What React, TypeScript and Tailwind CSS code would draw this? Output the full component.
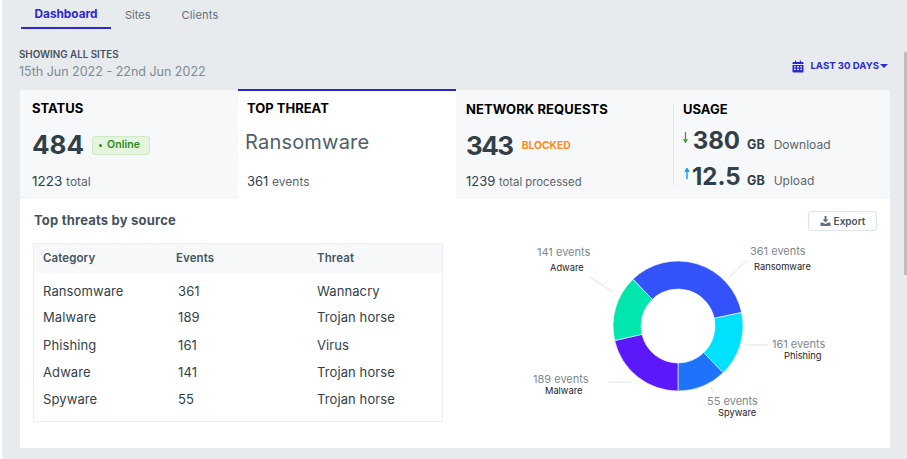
const font = "font-['Inter','Noto_Sans',sans-serif]";

function polar(r: number, deg: number) {
  const a = (deg * Math.PI) / 180;
  return [(100 + r * Math.sin(a)).toFixed(2), (100 - r * Math.cos(a)).toFixed(2)];
}

function seg(a0: number, a1: number) {
  const R = 65;
  const r = 37;
  const [x0, y0] = polar(R, a0);
  const [x1, y1] = polar(R, a1);
  const [x2, y2] = polar(r, a1);
  const [x3, y3] = polar(r, a0);
  const large = a1 - a0 > 180 ? 1 : 0;
  return `M${x0} ${y0}A${R} ${R} 0 ${large} 1 ${x1} ${y1}L${x2} ${y2}A${r} ${r} 0 ${large} 0 ${x3} ${y3}Z`;
}

function Donut() {
  const parts: [number, number, string][] = [
    [-44, 78, "#3352f9"],
    [78, 136, "#00e1fd"],
    [136, 180, "#1f73fa"],
    [180, 257, "#5b18f8"],
    [257, 316, "#00e6ad"],
  ];
  return (
    <svg width="200" height="200" viewBox="0 0 200 200" className="shrink-0">
      {parts.map(([a, b, c]) => (
        <path key={c} d={seg(a, b)} fill={c} stroke="#fff" strokeWidth="0.6" />
      ))}
    </svg>
  );
}

function Tabs() {
  return (
    <div className="flex h-[29px] pl-[19px] text-[11px]">
      <div className="flex h-[29px] w-[90px] items-center justify-center border-b-2 border-[#2a2ad0] pt-[3px] text-[11.8px] font-bold text-[#2a2ad0]">
        Dashboard
      </div>
      <div className="ml-[14px] pt-[7px] text-[#5f6f7a]">Sites</div>
      <div className="ml-[31px] pt-[7px] tracking-[0.2px] text-[#5f6f7a]">Clients</div>
    </div>
  );
}

function Usage({ arrow, value, label }: { arrow: React.ReactNode; value: string; label: string }) {
  return (
    <div className="flex items-baseline">
      <span className="w-[9px] self-start pt-[6px]">{arrow}</span>
      <span className="w-[48px] text-right text-[24px] leading-[30px] font-bold text-[#333f48]">{value}</span>
      <span className="ml-[7px] text-[12.5px] font-bold text-[#333f48]">GB</span>
      <span className="ml-[9px] text-[12px] text-[#5b656d]">{label}</span>
    </div>
  );
}

const rows = [
  ["Ransomware", "361", "Wannacry", "h-[26px]"],
  ["Malware", "189", "Trojan horse", "h-[26px]"],
  ["Phishing", "161", "Virus", "h-[30px]"],
  ["Adware", "141", "Trojan horse", "h-[24px]"],
  ["Spyware", "55", "Trojan horse", "h-[30px]"],
];

export default function App() {
  return (
    <div className={`${font} relative h-[459px] w-[907px] overflow-hidden bg-white`}>
      <div className="ml-[2px] h-full bg-[#e8ebee]">
        <Tabs />
        <div className="flex h-[61px] items-start pl-[17px] pr-[17px]">
          <div className="pt-[20px]">
            <div className="text-[9.8px] leading-[12px] font-semibold text-[#47535c]">SHOWING ALL SITES</div>
            <div className="mt-[3px] text-[12.5px] leading-[16px] text-[#7b8a94]">15th Jun 2022 - 22nd Jun 2022</div>
          </div>
          <div className="ml-auto flex items-center pt-[30px] pr-[2px] text-[9.6px] font-bold text-[#2a2ad0]">
            <svg width="12" height="13" viewBox="0 0 12 13" fill="#2a2ad0" className="mr-[6px]">
              <path d="M1.5 2H3V.5h1.2V2h3.6V.5H9V2h1.5A1 1 0 0 1 11.5 3v1H.5V3a1 1 0 0 1 1-1Z" />
              <path fillRule="evenodd" d="M.5 5h11v6.5a1 1 0 0 1-1 1h-9a1 1 0 0 1-1-1V5Zm1.5 1.2v1.4h1.8V6.2H2Zm3 0v1.4h2V6.2H5Zm3.2 0v1.4H10V6.2H8.2ZM2 8.7v1.4h1.8V8.7H2Zm3 0v1.4h2V8.7H5Zm3.2 0v1.4H10V8.7H8.2Z" />
            </svg>
            LAST 30 DAYS
            <span className="ml-[1px] h-0 w-0 border-x-[4px] border-t-[4px] border-x-transparent border-t-[#2a2ad0]" />
          </div>
        </div>
        <div className="ml-[18px] h-[358px] w-[870px] bg-white">
          <div className="flex h-[108px] border-b border-[#eef0f2] bg-[#f6f8fa]">
            <div className="w-[218px] pl-[12px] pt-[10px]">
              <div className="text-[13px] leading-[16px] font-bold text-black">STATUS</div>
              <div className="mt-[12px] flex items-center">
                <span className="text-[26px] leading-[34px] font-bold text-[#333f48]">484</span>
                <span className="ml-[8px] flex h-[19px] w-[58px] items-center rounded-[3px] border border-[#cfeac4] bg-[#e3f5dc] pl-[6px] text-[10.6px] font-semibold text-[#2f8a1c]">
                  <span className="mr-[5px] h-[3px] w-[3px] rounded-full bg-[#2f8a1c]" />
                  Online
                </span>
              </div>
              <div className="mt-[11px] text-[13.5px] leading-[16px] text-[#333f48]">
                1223 <span className="text-[12px] text-[#5b656d]">total</span>
              </div>
            </div>
            <div className="-mt-[1px] h-[109px] w-[218px] border-t-2 border-[#2a2ad0] bg-white pl-[9px] pt-[9px]">
              <div className="text-[13px] leading-[16px] font-bold text-black">TOP THREAT</div>
              <div className="mt-[12px] -ml-[2px] text-[20px] leading-[28px] tracking-[0.2px] text-[#4f5f69]">Ransomware</div>
              <div className="mt-[17px] text-[13px] leading-[16px] text-[#333f48]">
                361 <span className="text-[12px] text-[#5b656d]">events</span>
              </div>
            </div>
            <div className="w-[217px] pl-[10px] pt-[11px]">
              <div className="text-[13px] leading-[16px] tracking-[0.1px] font-bold text-black">NETWORK REQUESTS</div>
              <div className="mt-[12px] flex items-center">
                <span className="text-[26px] leading-[34px] font-bold tracking-[-1.5px] text-[#333f48]">343</span>
                <span className="ml-[9px] text-[10.3px] font-bold text-[#fb8c22]">BLOCKED</span>
              </div>
              <div className="mt-[10px] text-[13px] leading-[16px] text-[#333f48]">
                1239 <span className="text-[11.3px] text-[#5b656d]">total processed</span>
              </div>
            </div>
            <div className="mt-[13px] mb-[11px] flex-1 border-l border-[#e6e9ec] pl-[9px]">
              <div className="-mt-[2px] text-[13px] leading-[16px] font-bold text-black">USAGE</div>
              <div className="mt-[9px]">
                <Usage
                  value="380"
                  label="Download"
                  arrow={
                    <svg width="5" height="11" viewBox="0 0 5 11" fill="none" stroke="#3b9a27" strokeWidth="1.2">
                      <path d="M2.5 0v10M.7 7l1.8 3.3L4.3 7" />
                    </svg>
                  }
                />
                <div className="mt-[6px]">
                  <Usage
                    value="12.5"
                    label="Upload"
                    arrow={
                      <svg width="6" height="11" viewBox="0 0 6 11" fill="none" stroke="#0ea5ee" strokeWidth="1.5" className="ml-[1px]">
                        <path d="M3 11V1M1 3.8 3 .6l2 3.2" />
                      </svg>
                    }
                  />
                </div>
              </div>
            </div>
          </div>
          <div className="flex">
            <div className="ml-[13px] w-[410px]">
              <div className="pt-[14px] pl-[1px] text-[13px] leading-[16px] tracking-[0.2px] font-bold text-[#45555f]">Top threats by source</div>
              <div className="mt-[15px] h-[179px] border border-[#eceef0] text-[13px] tracking-[0.1px] text-[#333f48]">
                <div className="grid h-[29px] grid-cols-[133px_141px_1fr] items-center bg-[#f6f8fa] pl-[9px] pt-[1px] text-[11.5px] font-semibold text-[#45555f]">
                  <span>Category</span>
                  <span>Events</span>
                  <span>Threat</span>
                </div>
                <div className="pt-[6px]">
                  {rows.map(([a, b, c, h]) => (
                    <div key={a} className={`grid grid-cols-[135px_139px_1fr] items-center pl-[9px] ${h}`}>
                      <span>{a}</span>
                      <span>{b}</span>
                      <span>{c}</span>
                    </div>
                  ))}
                </div>
              </div>
            </div>
            <div className="relative flex-1">
              <button className="absolute right-[13px] top-[13px] flex h-[20px] w-[69px] items-center justify-center rounded-[3px] border border-[#dfe4e8] bg-white text-[10px] font-semibold text-[#45555f]">
                <svg width="11" height="10" viewBox="0 0 10 10" fill="#5b7080" className="mr-[3px]">
                  <path d="M4 0h2v3.5h2L5 6.5 2 3.5h2V0Z" />
                  <path d="M0 6.5h2.2L5 8l2.8-1.5H10V10H0V6.5Z" />
                </svg>
                Export
              </button>
              <svg width="447" height="250" className="block" fill="none">
                <g stroke="#dfe3e6" strokeWidth="1">
                  <path d="M286 80 303 63" />
                  <path d="M147 79 170 94" />
                  <path d="M302 147h23" />
                  <path d="M188 184h-23" />
                  <path d="M268 189l2 6" />
                </g>
                <g fontSize="11" fill="#80878d">
                  <text x="307" y="57">361 events</text>
                  <text x="94" y="58">141 events</text>
                  <text x="329" y="150">161 events</text>
                  <text x="90" y="185">189 events</text>
                  <text x="264" y="207">55 events</text>
                </g>
                <g fontSize="9.3" fill="#1c2328">
                  <text x="311" y="72">Ransomware</text>
                  <text x="107" y="73">Adware</text>
                  <text x="341" y="161">Phishing</text>
                  <text x="102" y="196">Malware</text>
                  <text x="275" y="218">Spyware</text>
                </g>
              </svg>
              <div className="absolute left-[135px] top-[28px]">
                <Donut />
              </div>
            </div>
          </div>
        </div>
      </div>
      <div className="absolute right-0 top-[52px] h-[223px] w-[3px] rounded-t-[1px] bg-[#bdbdbd]" />
    </div>
  );
}
